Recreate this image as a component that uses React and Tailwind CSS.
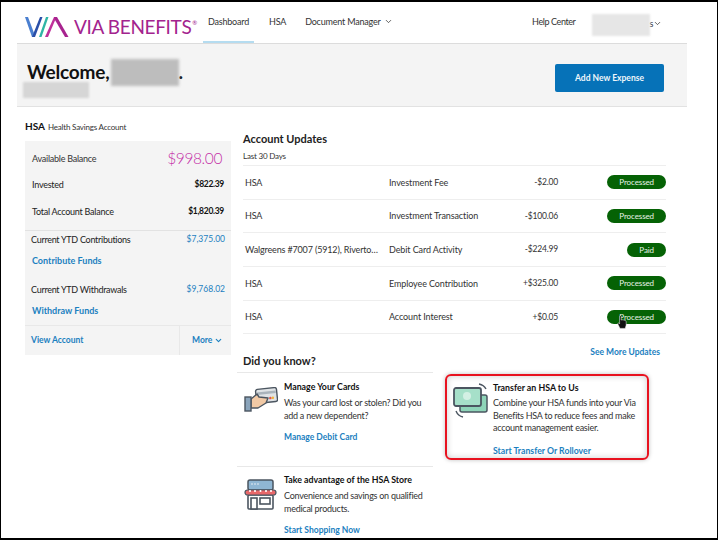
import React from "react";
import { ChevronDown } from "lucide-react";

const rows = [
  ["HSA", "Investment Fee", "-$2.00", "Processed"],
  ["HSA", "Investment Transaction", "-$100.06", "Processed"],
  ["Walgreens #7007 (5912), Riverto…", "Debit Card Activity", "-$224.99", "Paid"],
  ["HSA", "Employee Contribution", "+$325.00", "Processed"],
  ["HSA", "Account Interest", "+$0.05", "Processed"],
];

function Logo() {
  return (
    <div className="flex items-center gap-[4px]">
      <svg width="45" height="22" viewBox="0 0 45 22" className="shrink-0">
        <path d="M0 1 L3 1 L9 17 L8 21 L7 21 Z" fill="#4a7fd0" />
        <path d="M7 21 L15 1 L17.5 1 L10 21 Z" fill="#2a4fa8" />
        <path d="M14 21 L21 1 L23.5 1 L16.5 21 Z" fill="#2fb5a5" />
        <path d="M20 21 L29 1 L31.5 1 L23 21 Z" fill="#c0309a" />
        <path d="M29 1 L32 1 L43.5 21 L40 21 L30 4 Z" fill="#a8238f" />
      </svg>
      <span className="whitespace-nowrap text-[19px] font-normal leading-none tracking-[-0.35px] text-[#a3238e]">VIA BENEFITS</span>
      <span className="-ml-[3px] mt-[2px] self-start text-[6px] text-[#a3238e]">®</span>
    </div>
  );
}

function CardIcon() {
  return (
    <svg width="34" height="26" viewBox="0 0 34 26" className="shrink-0">
      <g transform="rotate(-6 22 8)">
        <rect x="12" y="1.5" width="21" height="14" rx="2" fill="#dfe3e6" stroke="#4b5560" strokeWidth="1.4" />
        <rect x="13" y="4.5" width="19" height="2.5" fill="#a9b3bb" />
        <circle cx="26" cy="11.5" r="1.3" fill="#e0574f" />
        <circle cx="28.5" cy="11.5" r="1.3" fill="#f0b43c" />
      </g>
      <path d="M7 12 L13 7 L15 10 L24 11 L22 16 L14 21 L7 21 Z" fill="#f1c9a5" stroke="#4b5560" strokeWidth="1.4" strokeLinejoin="round" />
      <rect x="1" y="10" width="6" height="14" fill="#8aa4bb" stroke="#4b5560" strokeWidth="1.4" />
    </svg>
  );
}

function StoreIcon() {
  return (
    <svg width="33" height="31" viewBox="0 0 33 31" className="shrink-0">
      <rect x="4" y="1" width="25" height="10" rx="2" fill="#8fb6d3" stroke="#4b5560" strokeWidth="1.5" />
      <circle cx="8" cy="5" r="0.8" fill="#eef2f5" />
      <circle cx="11" cy="5" r="0.8" fill="#eef2f5" />
      <circle cx="14" cy="5" r="0.8" fill="#eef2f5" />
      <rect x="4" y="16" width="25" height="14" rx="1" fill="#fff" stroke="#4b5560" strokeWidth="1.6" />
      <rect x="7" y="19" width="6" height="11" fill="#fff" stroke="#4b5560" strokeWidth="1.6" />
      <rect x="16" y="19" width="10" height="6" fill="#fff" stroke="#4b5560" strokeWidth="1.6" />
      <rect x="1" y="11" width="31" height="5" rx="2.5" fill="#e8686a" stroke="#4b5560" strokeWidth="1.2" />
      <path d="M6 11 v2 M11 11 v2 M16.5 11 v2 M22 11 v2 M27 11 v2" stroke="#fff" strokeWidth="1.6" />
    </svg>
  );
}

function MoneyIcon() {
  return (
    <svg width="36" height="36" viewBox="0 0 36 36" className="shrink-0">
      <path d="M26 1 Q31 2 33 6" fill="none" stroke="#4b5560" strokeWidth="1.4" />
      <path d="M3 28 Q5 33 10 34" fill="none" stroke="#4b5560" strokeWidth="1.4" />
      <rect x="7" y="12" width="27" height="17" rx="2" fill="#8ed4b8" stroke="#4b5560" strokeWidth="1.5" />
      <rect x="1" y="5" width="27" height="18" rx="2" fill="#a6e0c9" stroke="#4b5560" strokeWidth="1.8" />
      <circle cx="14" cy="13" r="4" fill="#d3f0e4" />
    </svg>
  );
}

function HandCursor() {
  return (
    <svg width="10" height="14" viewBox="0 0 10 14" className="absolute left-[374px] top-[208px]">
      <path
        d="M2.6 1.2 C2.6 0.3 4.2 0.3 4.2 1.2 L4.2 5 L5.4 4.8 L6.7 5 L8 5.4 C8.9 5.6 9.2 6.2 9.2 7 L9.2 10 L8.2 13.4 L3 13.4 L0.8 9 C0.5 8.2 1.5 7.6 2.1 8.2 L2.6 8.9 Z"
        fill="#111"
        stroke="#fff"
        strokeWidth="0.5"
      />
    </svg>
  );
}

function Pill({ label }) {
  return (
    <span className="inline-flex h-[14px] items-center justify-center rounded-full bg-[#056205] px-[12px] text-[8px] leading-none text-[#e8f2e8]">
      {label}
    </span>
  );
}

function Row({ label, value }) {
  return (
    <div className="flex items-center justify-between text-[9px] tracking-[-0.25px] text-[#222]">
      <span>{label}</span>
      <span className="text-[8.5px] font-bold tracking-[-0.3px] text-[#111]">{value}</span>
    </div>
  );
}

export default function App() {
  return (
    <div
      className="relative h-[540px] w-[718px] overflow-hidden border-x border-y-2 border-black bg-white text-[#222]"
      style={{ fontFamily: "Lato, 'Open Sans', sans-serif" }}
    >
      <div className="ml-[16px] w-[670px]">
        <header className="flex h-[42px] items-stretch border-b border-[#dcdcdc]">
          <div className="flex w-[186px] items-center pl-[8px] pt-[8px]">
            <Logo />
          </div>
          <nav className="flex items-stretch text-[9px] tracking-[-0.2px] text-[#333]">
            <a className="flex w-[51px] items-start justify-center border-b-2 border-[#b5dcf0] pt-[13px]">Dashboard</a>
            <a className="ml-[15px] pt-[13px]">HSA</a>
            <a className="ml-[19px] flex items-start gap-[3px] pt-[13px]">
              Document Manager <ChevronDown size={9} className="mt-[2px]" />
            </a>
          </nav>
          <div className="ml-auto flex items-start pr-[25px] pt-[13px] text-[9px] tracking-[-0.4px] text-[#333]">
            <span>Help Center</span>
            <div className="-mt-[1px] ml-[16px] h-[22px] w-[58px] bg-[#e6e6e6] blur-[1px]" />
            <span className="mt-[2px]">s</span>
            <ChevronDown size={9} className="mt-[4px]" />
          </div>
        </header>

        <section className="flex h-[63px] items-start justify-between border-b border-[#e2e2e2] bg-[#f4f4f4] pl-[10px] pr-[23px]">
          <div className="pt-[13px]">
            <div className="flex items-center text-[19px] font-bold leading-[30px] tracking-[-0.2px] text-[#111]">
              Welcome,
              <span className="ml-[1px] h-[27px] w-[68px] bg-[#bdbdbd] blur-[1.5px]" />
              <span>.</span>
            </div>
            <div className="-ml-[4px] -mt-[5px] h-[16px] w-[66px] bg-[#d6d6d6] blur-[1px]" />
          </div>
          <button className="mt-[20px] h-[28px] w-[109px] rounded-[2px] bg-[#0672b8] text-[8.5px] font-bold text-[#eef6fb]">
            Add New Expense
          </button>
        </section>

        <main className="flex gap-[12px] pl-[8px]">
          <aside className="w-[206px] shrink-0 pt-[13px]">
            <div className="flex items-baseline gap-[3px] leading-[13px]">
              <span className="text-[10px] font-bold text-[#111]">HSA</span>
              <span className="text-[8px] tracking-[-0.2px] text-[#333]">Health Savings Account</span>
            </div>
            <div className="mt-[7px] bg-[#f4f4f4]">
              <div className="flex h-[90px] flex-col border-b border-[#e2e2e2] px-[7px] pt-[6px]">
                <div className="flex h-[24px] items-center justify-between text-[9px] tracking-[-0.25px] text-[#333]">
                  <span>Available Balance</span>
                  <span className="mr-[2px] text-[15.5px] font-light tracking-[-0.4px] text-[#c42fa7]">$998.00</span>
                </div>
                <div className="mt-[7px] flex flex-col gap-[13px]">
                  <Row label="Invested" value="$822.39" />
                  <Row label="Total Account Balance" value="$1,820.39" />
                </div>
              </div>
              <div className="h-[95px] border-b border-[#e8e8e8] px-[6px] pt-[2px] text-[9px]">
                <div className="flex items-center justify-between leading-[13px]">
                  <span className="tracking-[-0.28px] text-[#222]">Current YTD Contributions</span>
                  <span className="text-[8.5px] text-[#1b80c0]">$7,375.00</span>
                </div>
                <a className="mt-[8px] block pl-[1px] font-bold leading-[13px] text-[#1b80c0]">Contribute Funds</a>
                <div className="mt-[16px] flex items-center justify-between leading-[13px]">
                  <span className="tracking-[-0.28px] text-[#222]">Current YTD Withdrawals</span>
                  <span className="text-[8.5px] text-[#1b80c0]">$9,768.02</span>
                </div>
                <a className="mt-[8px] block pl-[1px] font-bold leading-[13px] text-[#1b80c0]">Withdraw Funds</a>
              </div>
              <div className="flex h-[29px] items-center text-[8.5px] font-bold text-[#1b80c0]">
                <a className="w-[154px] pl-[6px]">View Account</a>
                <a className="flex h-full flex-1 items-center gap-[2px] border-l border-[#e8e8e8] pl-[12px]">
                  More <ChevronDown size={9} strokeWidth={3} />
                </a>
              </div>
            </div>
          </aside>

          <div className="relative w-[423px] pt-[24px]">
            <h2 className="text-[11px] font-bold leading-[16px] text-[#222]">Account Updates</h2>
            <p className="mt-[3px] text-[8px] leading-[12px] tracking-[-0.2px] text-[#333]">Last 30 Days</p>
            <div className="mt-[3px] border-t border-[#eeeeee]">
              {rows.map((r, i) => (
                <div key={i} className="grid h-[33.7px] grid-cols-[146px_100px_69px_1fr] items-center border-b border-[#eeeeee] text-[9px] tracking-[-0.1px] text-[#333]">
                  <span className="whitespace-nowrap pl-[2px] tracking-[-0.15px]">{r[0]}</span>
                  <span className="whitespace-nowrap">{r[1]}</span>
                  <span className="text-right text-[8.5px] tracking-[-0.2px]">{r[2]}</span>
                  <span className="text-right"><Pill label={r[3]} /></span>
                </div>
              ))}
            </div>
            <HandCursor />
            <div className="flex items-start justify-between">
              <h3 className="mt-[19px] text-[11px] font-bold leading-[15px] text-[#222]">Did you know?</h3>
              <a className="mr-[6px] mt-[12px] text-[8.5px] font-bold leading-[13px] text-[#1b80c0]">See More Updates</a>
            </div>

            <div className="-ml-[6px] mt-[4px] flex">
              <div className="w-[196px] shrink-0 border-t border-[#e8e8e8]">
                <div className="flex h-[94px] gap-[6px] border-b border-[#e8e8e8] pl-[7px] pt-[7px]">
                  <div className="pt-[7px]"><CardIcon /></div>
                  <div>
                    <p className="text-[8.8px] font-bold leading-[13px] text-[#111]">Manage Your Cards</p>
                    <p className="mt-[4px] w-[150px] text-[9px] leading-[12.5px] tracking-[-0.25px] text-[#333]">Was your card lost or stolen? Did you add a new dependent?</p>
                    <a className="mt-[9px] block text-[8.5px] font-bold leading-[13px] text-[#1b80c0]">Manage Debit Card</a>
                  </div>
                </div>
                <div className="flex gap-[7px] pl-[7px] pt-[6px]">
                  <div className="pt-[6px]"><StoreIcon /></div>
                  <div>
                    <p className="text-[8.8px] font-bold leading-[13px] text-[#111]">Take advantage of the HSA Store</p>
                    <p className="mt-[4px] w-[150px] text-[9px] leading-[12.5px] tracking-[-0.25px] text-[#333]">Convenience and savings on qualified medical products.</p>
                    <a className="mt-[9px] block text-[8.5px] font-bold leading-[13px] text-[#1b80c0]">Start Shopping Now</a>
                  </div>
                </div>
              </div>
              <div className="ml-[12px] mt-[2px] flex h-[86px] w-[204px] gap-[4px] rounded-[6px] border-2 border-[#e8121f] pl-[6px] pt-[5px] shadow-[0_0_4px_rgba(0,0,0,0.25),inset_0_0_6px_rgba(0,0,0,0.2)]">
                <div className="pt-[2px]"><MoneyIcon /></div>
                <div>
                  <p className="text-[8.8px] font-bold leading-[13px] text-[#111]">Transfer an HSA to Us</p>
                  <p className="mt-[3px] w-[150px] text-[9px] leading-[12.5px] tracking-[-0.25px] text-[#333]">Combine your HSA funds into your Via Benefits HSA to reduce fees and make account management easier.</p>
                  <a className="mt-[9px] block text-[8.7px] font-bold leading-[13px] text-[#1b80c0]">Start Transfer Or Rollover</a>
                </div>
              </div>
            </div>
          </div>
        </main>
      </div>
    </div>
  );
}
